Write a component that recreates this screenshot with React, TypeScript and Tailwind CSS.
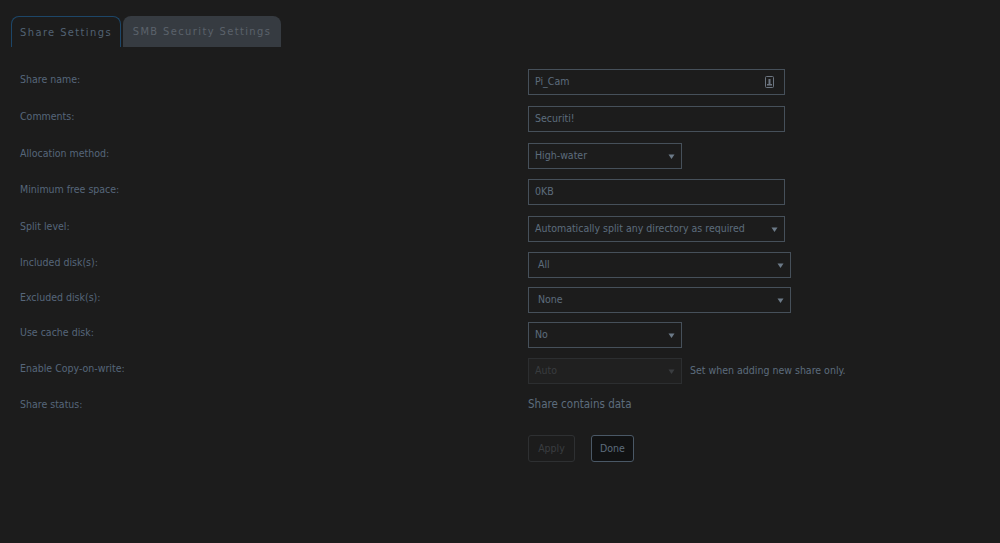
import React from "react";

const font = { fontFamily: "'DejaVu Sans Condensed', 'DejaVu Sans', sans-serif" };

function Arrow({ dim }: { dim?: boolean }) {
  return (
    <svg width="7" height="7" viewBox="0 0 7 7" className="shrink-0">
      <path d="M0.5 1.5 H6.5 L3.5 6 Z" fill={dim ? "#3a3d40" : "#6c7a88"} />
    </svg>
  );
}

function TextBox({ value, w, icon }: { value: string; w: string; icon?: boolean }) {
  return (
    <div className={`${w} h-[26px] border border-[#46505a] flex items-center justify-between pl-[6px] pr-[10px] text-[10.5px] text-[#5d6c7c]`}>
      <span>{value}</span>
      {icon && (
        <svg width="9" height="12" viewBox="0 0 9 12">
          <rect x="0.5" y="0.5" width="8" height="11" rx="1" fill="none" stroke="#6c7580" />
          <rect x="3.5" y="3" width="2" height="5" fill="#6c7580" />
          <rect x="2" y="8" width="5" height="1.5" fill="#6c7580" />
        </svg>
      )}
    </div>
  );
}

function Select({ value, w, pl = "pl-[6px]", dim }: { value: string; w: string; pl?: string; dim?: boolean }) {
  return (
    <div
      className={`${w} h-[26px] border flex items-center justify-between ${pl} pr-[6px] text-[10.5px] ${
        dim ? "border-[#2c2e30] bg-[#202020] text-[#393c3f]" : "border-[#46505a] text-[#5d6c7c]"
      }`}
    >
      <span>{value}</span>
      <Arrow dim={dim} />
    </div>
  );
}

const rows: { label: string; mt: string; control: React.ReactNode }[] = [
  { label: "Share name:", mt: "mt-0", control: <TextBox value="Pi_Cam" w="w-[257px]" icon /> },
  { label: "Comments:", mt: "mt-[11px]", control: <TextBox value="Securiti!" w="w-[257px]" /> },
  { label: "Allocation method:", mt: "mt-[11px]", control: <Select value="High-water" w="w-[154px]" /> },
  { label: "Minimum free space:", mt: "mt-[10px]", control: <TextBox value="0KB" w="w-[257px]" /> },
  { label: "Split level:", mt: "mt-[11px]", control: <Select value="Automatically split any directory as required" w="w-[257px]" /> },
  { label: "Included disk(s):", mt: "mt-[10px]", control: <Select value="All" w="w-[263px]" pl="pl-[9px]" /> },
  { label: "Excluded disk(s):", mt: "mt-[9px]", control: <Select value="None" w="w-[263px]" pl="pl-[9px]" /> },
  { label: "Use cache disk:", mt: "mt-[9px]", control: <Select value="No" w="w-[154px]" /> },
  {
    label: "Enable Copy-on-write:",
    mt: "mt-[10px]",
    control: (
      <div className="flex items-center gap-[8px]">
        <Select value="Auto" w="w-[154px]" dim />
        <span className="text-[10.5px] text-[#5d6c7c]">Set when adding new share only.</span>
      </div>
    ),
  },
];

export default function App() {
  return (
    <div className="w-[1000px] h-[543px] bg-[#1c1c1c] overflow-hidden" style={font}>
      <div className="flex items-end gap-[2px] pl-[11px] pt-[16px]">
        <div className="h-[31px] w-[110px] border border-b-0 border-[#1d4668] rounded-t-[8px] flex items-center justify-center pt-[2px] text-[11px] tracking-[1.4px] text-[#526273]">
          Share Settings
        </div>
        <div className="h-[31px] w-[158px] bg-[#363b41] rounded-t-[8px] flex items-center justify-center pt-[2px] text-[11px] tracking-[1.4px] text-[#5b626b]">
          SMB Security Settings
        </div>
      </div>

      <div className="pl-5 pt-[22px] flex flex-col">
        {rows.map((r) => (
          <div key={r.label} className={`grid grid-cols-[508px_1fr] items-start ${r.mt}`}>
            <div className="pt-[3px] text-[10.5px] leading-[14px] text-[#56667a]">{r.label}</div>
            {r.control}
          </div>
        ))}
        <div className="grid grid-cols-[508px_1fr] items-center h-[26px] mt-[8px]">
          <div className="text-[10.5px] text-[#56667a]">Share status:</div>
          <div className="text-[11.5px] text-[#5d6c7c]">Share contains data</div>
        </div>
        <div className="grid grid-cols-[508px_1fr] mt-[17px]">
          <div />
          <div className="flex gap-[16px]">
            <div className="h-[27px] w-[47px] rounded-[3px] border border-[#2e3032] flex items-center justify-center text-[10.5px] text-[#3a3d40]">
              Apply
            </div>
            <div className="h-[27px] w-[43px] rounded-[3px] border border-[#4a5866] bg-[#111213] flex items-center justify-center text-[10.5px] text-[#5d6c7c]">
              Done
            </div>
          </div>
        </div>
      </div>
    </div>
  );
}
